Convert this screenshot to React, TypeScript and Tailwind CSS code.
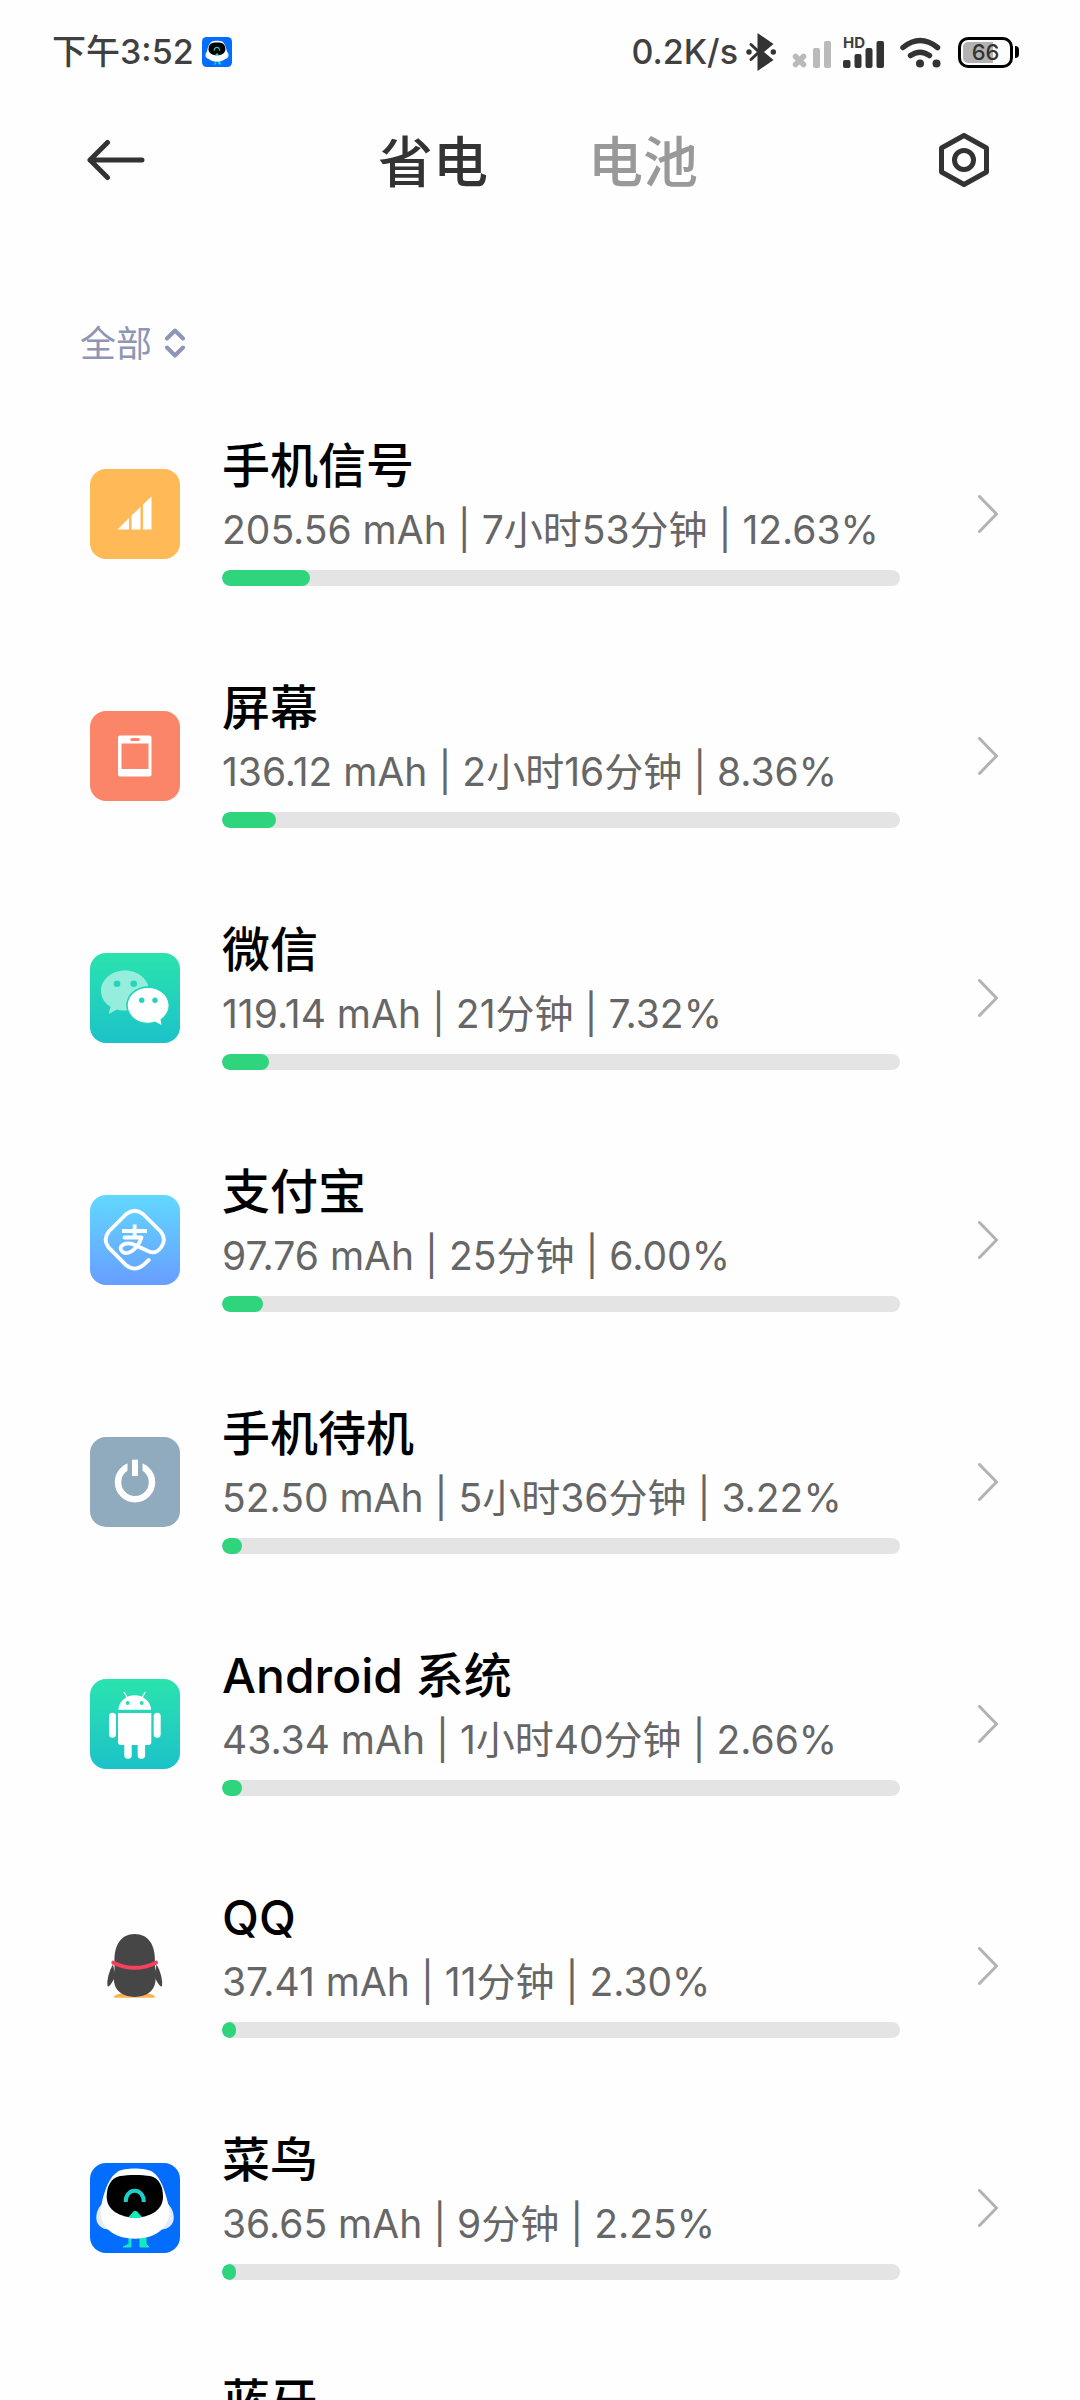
import { useState } from 'react';
import type { ReactNode } from 'react';

interface UsageItem {
  name: string;
  detail?: string;
  percent: number;
  icon: ReactNode;
}

interface TileProps {
  from: string;
  to?: string;
  id: string;
  children?: ReactNode;
}

// Rounded 90x90 app tile with a vertical gradient
function Tile({ from, to = from, id, children }: TileProps) {
  return (
    <svg viewBox="0 0 90 90" className="size-[90px] shrink-0" aria-hidden="true">
      <defs>
        <linearGradient id={id} x1="0" y1="0" x2="0" y2="1">
          <stop offset="0" stopColor={from} />
          <stop offset="1" stopColor={to} />
        </linearGradient>
      </defs>
      <rect width="90" height="90" rx="16" fill={`url(#${id})`} />
      {children}
    </svg>
  );
}

function SignalIcon() {
  return (
    <Tile id="signal" from="#ffb957">
      <path
        d="M27.5 60.5 39 49V60.5ZM41.5 60.5V46.5L50.5 38V60.5ZM53 60.5V35.5L61.5 27.5V60.5Z"
        fill="#fff"
      />
    </Tile>
  );
}

function ScreenIcon() {
  return (
    <Tile id="screen" from="#fb8568">
      <rect x="28" y="24.5" width="33.5" height="41" rx="2" fill="#fff" />
      <rect x="31.5" y="32.5" width="27" height="25.5" fill="#fb8568" />
      <rect x="40.3" y="27" width="9.5" height="3" rx="1.5" fill="#fb8568" />
    </Tile>
  );
}

function WeChatIcon() {
  return (
    <Tile id="wechat" from="#2ae3ae" to="#1cc2c9">
      <path
        d="M35 17.4C21.5 17.4 11 26.5 11 37.7C11 44.5 14.5 50 20.5 53.7L18.7 61L27 56.5C37 60 59 54 59 37.7C59 26.5 48.5 17.4 35 17.4Z"
        fill="#94eedb"
      />
      <ellipse cx="58" cy="52.3" rx="21.8" ry="19" fill="#24d3bb" />
      <path
        d="M58 35C46.8 35 37.8 42.7 37.8 52.3C37.8 62 46.8 69.7 58 69.7C60.5 69.7 63 69.3 65 68.6L71.5 72L70.5 66.2C75.5 63 78.5 58 78.5 52.3C78.5 42.7 69.2 35 58 35Z"
        fill="#fff"
      />
      <g fill="#25d5b9">
        <circle cx="27" cy="30.7" r="3.3" />
        <circle cx="43.7" cy="30.7" r="3.3" />
        <circle cx="51.7" cy="47.3" r="2.7" />
        <circle cx="65" cy="47.3" r="2.7" />
      </g>
    </Tile>
  );
}

function AlipayIcon() {
  return (
    <Tile id="alipay" from="#61d8ff" to="#689eff">
      <g fill="none" stroke="#fff" strokeWidth="3.8" strokeLinejoin="round">
        <path
          d="M58.7 65L53 70.3Q44.7 77 36.3 70.3L18.8 52.7Q12.5 44.7 18.8 36.5L36.3 19Q44.7 12.5 53 19L70.7 36.5Q77 44.7 71 52.5Q66 59.5 59 56.5L46 50.5Q39 47 33.5 49.5Q28.5 52.5 32 56.3Q36 60 42 56Q48.5 51.5 51.5 42.5H34.5"
          strokeLinecap="round"
        />
        <path d="M32 36H57M44.7 29.5V43" />
      </g>
    </Tile>
  );
}

function PowerIcon() {
  return (
    <Tile id="power" from="#90abbd">
      <circle cx="45" cy="45.3" r="17" fill="none" stroke="#fff" strokeWidth="6.5" />
      <rect x="37.5" y="20" width="15" height="17" fill="#90abbd" />
      <rect x="42" y="22.7" width="6" height="16.3" fill="#fff" />
    </Tile>
  );
}

function AndroidIcon() {
  return (
    <Tile id="android" from="#2ae3ae" to="#1cc2c9">
      <g fill="#fff">
        <path d="M28.3 30.7C28.8 22.5 36 16.3 44.7 16.3C53.4 16.3 60.7 22.5 61.2 30.7Z" />
        <path d="M28 34H61.3V63Q61.3 66 58.3 66H31Q28 66 28 63Z" />
        <rect x="19" y="33.7" width="7" height="25" rx="3.5" />
        <rect x="63.7" y="33.7" width="7" height="25" rx="3.5" />
        <rect x="34.3" y="60" width="7.4" height="19.7" rx="3.5" />
        <rect x="47.7" y="60" width="7.4" height="19.7" rx="3.5" />
      </g>
      <path d="M34 13L37.5 19M55.3 13L51.8 19" stroke="#fff" strokeWidth="1.3" />
      <circle cx="37.7" cy="24" r="2" fill="#29deb1" />
      <circle cx="51.7" cy="24" r="2" fill="#29deb1" />
    </Tile>
  );
}

function QQIcon() {
  return (
    <Tile id="qq" from="#fefefe">
      <path d="M24 76.7C24 73.5 30 72 36 72H53C59 72 65 73.5 65 76.7Z" fill="#fdb24e" />
      <path
        d="M24.5 41C24 24 31 13 44.7 13C58.5 13 65.5 24 65 41L65 49C66.5 58 66 66 60 71C52 77.5 37.5 77.5 29.5 71C23.5 66 23 58 24.5 49Z"
        fill="#464646"
      />
      <path d="M23 43.5C19.5 49 16.5 59 17.5 65C18.5 67 21.5 63 25.5 55Z" fill="#464646" />
      <path d="M66.5 43.5C70 49 73 59 72 65C71 67 68 63 64 55Z" fill="#464646" />
      <path d="M23.3 41.7Q44.7 52 66 41.7" fill="none" stroke="#f9415f" strokeWidth="4" strokeLinecap="round" />
    </Tile>
  );
}

function BirdShapes() {
  return (
    <>
      <path
        d="M39 75V81L33 84H41V75ZM50 75V84H59L56 81V75Z"
        fill="#12ebbd"
        stroke="#12ebbd"
        strokeWidth="1"
      />
      <path
        d="M14 39C8 44 6 50 6.3 56C7 62 12 66.5 19 66.5H71C78 66.5 83 62 83.7 56C84 50 82 44 76 39Z"
        fill="#e3ebf8"
      />
      <path
        d="M28 8.5C34 4.5 55 4.5 62 8.5C71 14 75 28 79 44C82 63 67 75.7 45 75.7C23 75.7 8 63 11 44C14 28 19 14 28 8.5Z"
        fill="#fff"
      />
      <path
        d="M30 13C38 11.5 52 11.5 60 13C69 15 73 23 73 34C73 47 60 54.5 45 54.5C30 54.5 16.7 47 16.7 34C16.7 23 21 15 30 13Z"
        fill="#000"
      />
      <path d="M38.5 54L43.5 48.5Q45.3 47 47 48.5L52 54Q45 56 38.5 54Z" fill="#12ebbd" />
      <path d="M35.7 39C35.5 24 54 24 53.8 39" fill="none" stroke="#1ccfca" strokeWidth="4" />
    </>
  );
}

function CainiaoIcon() {
  return (
    <Tile id="cainiao" from="#036dfe">
      <BirdShapes />
    </Tile>
  );
}

function BluetoothTile() {
  return (
    <Tile id="bluetooth" from="#4da3ff">
      <path
        d="M32 33 58 57 45 68V22L58 33 32 57"
        fill="none"
        stroke="#fff"
        strokeWidth="4"
        strokeLinejoin="round"
      />
    </Tile>
  );
}

const items: UsageItem[] = [
  { name: '手机信号', detail: '205.56 mAh | 7小时53分钟 | 12.63%', percent: 12.63, icon: <SignalIcon /> },
  { name: '屏幕', detail: '136.12 mAh | 2小时16分钟 | 8.36%', percent: 8.36, icon: <ScreenIcon /> },
  { name: '微信', detail: '119.14 mAh | 21分钟 | 7.32%', percent: 7.32, icon: <WeChatIcon /> },
  { name: '支付宝', detail: '97.76 mAh | 25分钟 | 6.00%', percent: 6, icon: <AlipayIcon /> },
  { name: '手机待机', detail: '52.50 mAh | 5小时36分钟 | 3.22%', percent: 3.22, icon: <PowerIcon /> },
  { name: 'Android 系统', detail: '43.34 mAh | 1小时40分钟 | 2.66%', percent: 2.66, icon: <AndroidIcon /> },
  { name: 'QQ', detail: '37.41 mAh | 11分钟 | 2.30%', percent: 2.3, icon: <QQIcon /> },
  { name: '菜鸟', detail: '36.65 mAh | 9分钟 | 2.25%', percent: 2.25, icon: <CainiaoIcon /> },
  { name: '蓝牙', percent: 2, icon: <BluetoothTile /> },
];

function StatusBar() {
  return (
    <div className="h-[104px] shrink-0 pl-[52px] pr-[61px] flex items-center justify-between text-[34px] leading-[40px] text-[#404040]">
      <div className="flex items-center gap-2">
        <span className="font-medium">下午3:52</span>
        <svg viewBox="0 0 90 90" className="size-[30px]" aria-hidden="true">
          <rect width="90" height="90" rx="14" fill="#036dfe" />
          <g transform="translate(4.5 6) scale(0.9)">
            <BirdShapes />
          </g>
        </svg>
      </div>

      <div className="flex items-center">
        <span className="font-medium">0.2K/s</span>

        {/* Bluetooth */}
        <svg viewBox="0 0 30 38" className="ml-2 w-[30px] h-[38px]" fill="#333" aria-hidden="true">
          <path d="M11.5 0 27.5 11 18 19 27.5 27 11.5 38Z" />
          <path d="M5 11.5 13 19 5 26.5" fill="none" stroke="#333" strokeWidth="3" strokeLinecap="round" />
          <circle cx="3" cy="19" r="2.7" />
          <circle cx="27.3" cy="19" r="2.7" />
        </svg>

        {/* SIM 1, no service */}
        <svg viewBox="0 0 39 31" className="ml-4 w-[39px] h-[31px]" fill="#bababa" aria-hidden="true">
          <path d="M3.5 19.5 11.5 27.5M11.5 19.5 3.5 27.5" stroke="#bababa" strokeWidth="5.5" strokeLinecap="round" />
          <rect x="21" y="11" width="7" height="20" rx="2" />
          <rect x="32" y="4" width="7" height="27" rx="2" />
        </svg>

        {/* SIM 2 */}
        <div className="relative ml-3">
          <svg viewBox="0 0 41 31" className="w-[41px] h-[31px]" fill="#333" aria-hidden="true">
            <rect y="23" width="7.5" height="8" rx="2" />
            <rect x="11.5" y="17" width="7" height="14" rx="2" />
            <rect x="22.5" y="11" width="7" height="20" rx="2" />
            <rect x="33.5" y="4" width="7.5" height="27" rx="2" />
          </svg>
          <span className="absolute left-0 top-0 text-[15px] leading-3 font-bold">HD</span>
        </div>

        {/* Wi-Fi */}
        <svg viewBox="0 0 41 31" className="ml-4 w-[41px] h-[31px]" fill="none" stroke="#333" strokeWidth="5.5" strokeLinecap="round" aria-hidden="true">
          <path d="M3 10.5Q20 -3.5 37.5 10.5M10.5 18.5Q20 12 29.5 18.5" />
          <circle cx="20" cy="26.5" r="4" fill="#333" stroke="none" />
          <circle cx="36.5" cy="26.5" r="4" fill="#333" stroke="none" />
        </svg>

        {/* Battery */}
        <div className="ml-[17px] flex items-center gap-0.5">
          <div className="relative w-[55px] h-[31px] rounded-[10px] border-[3px] border-black p-0.5">
            <div className="h-full w-[30px] rounded-l-[5px] bg-[#b2b2b2]" />
            <span className="absolute inset-0 flex items-center justify-center text-[22px] leading-none font-medium text-[#333]">
              66
            </span>
          </div>
          <div className="w-1 h-3 rounded-r-full bg-black" />
        </div>
      </div>
    </div>
  );
}

function Header() {
  const [tab, setTab] = useState('save');

  return (
    <header className="h-[112px] shrink-0 pl-[87px] pr-[91px] grid grid-cols-[1fr_auto_1fr] items-center">
      <button aria-label="返回" className="justify-self-start">
        <svg viewBox="0 0 58 40" className="w-[58px] h-10" fill="none" stroke="#333" strokeWidth="5" strokeLinecap="round" strokeLinejoin="round">
          <path d="M20.5 2.5 3 20 20.5 37.5M3 20H55" />
        </svg>
      </button>
      <div role="tablist" className="pt-1 flex gap-[100px] text-[55px] leading-[72px] font-medium">
        <button
          role="tab"
          aria-selected={tab === 'save'}
          onClick={() => setTab('save')}
          className={tab === 'save' ? 'text-[#333]' : 'text-[#999]'}
        >
          省电
        </button>
        <button
          role="tab"
          aria-selected={tab === 'battery'}
          onClick={() => setTab('battery')}
          className={tab === 'battery' ? 'text-[#333]' : 'text-[#999]'}
        >
          电池
        </button>
      </div>
      <button aria-label="设置" className="justify-self-end">
        <svg viewBox="0 0 50 54" className="w-[50px] h-[54px]" fill="none" stroke="#333" strokeWidth="5" strokeLinejoin="round">
          <path d="M25 2.5 47.5 15V39L25 51.5 2.5 39V15Z" />
          <circle cx="25" cy="27" r="9.5" />
        </svg>
      </button>
    </header>
  );
}

function UsageRow({ item }: { item: UsageItem }) {
  return (
    <li>
      <button className="w-full h-[242px] pl-[90px] pr-[82px] flex items-center text-left">
        {item.icon}
        <div className="ml-[42px] mr-[78px] flex-1 pb-1.5">
          <div className="mb-1 text-[48px] leading-[60px] font-medium text-black">{item.name}</div>
          <div className="h-[60px] text-[39px] leading-[60px] text-[#666] whitespace-nowrap">{item.detail}</div>
          <div className="mt-2.5 h-4 rounded-full bg-[#e4e4e4] overflow-hidden">
            <div
              className="h-full rounded-full bg-[#2fd57d]"
              style={{ width: `${Math.round(item.percent)}%` }}
            />
          </div>
        </div>
        <svg viewBox="0 0 20 38" className="w-5 h-[38px] shrink-0" fill="none" stroke="#b3b3b3" strokeWidth="3" strokeLinecap="round" strokeLinejoin="round" aria-hidden="true">
          <path d="M1.5 1.5 18.5 19 1.5 36.5" />
        </svg>
      </button>
    </li>
  );
}

export default function App() {
  return (
    <div className="h-screen flex flex-col overflow-hidden bg-[#fefefe] font-['Inter','Noto_Sans_CJK_SC',sans-serif]">
      <StatusBar />
      <Header />
      <div className="shrink-0 pl-20 pt-[104px] pb-[25px] flex">
        <div className="relative text-[#8e95b5]">
          <select
            aria-label="筛选"
            className="appearance-none bg-transparent pr-8 text-[36px] leading-[48px] h-12 focus:outline-none"
          >
            <option>全部</option>
          </select>
          <svg viewBox="0 0 20 30" className="absolute right-0 top-2 w-5 h-[30px] pointer-events-none" fill="none" stroke="currentColor" strokeWidth="4" strokeLinecap="round" strokeLinejoin="round" aria-hidden="true">
            <path d="M2 10.5 10 2.5 18 10.5M2 19.5 10 27.5 18 19.5" />
          </svg>
        </div>
      </div>
      <ul className="flex-1 min-h-0 overflow-y-auto [scrollbar-width:none]">
        {items.map(item => (
          <UsageRow key={item.name} item={item} />
        ))}
      </ul>
    </div>
  );
}
